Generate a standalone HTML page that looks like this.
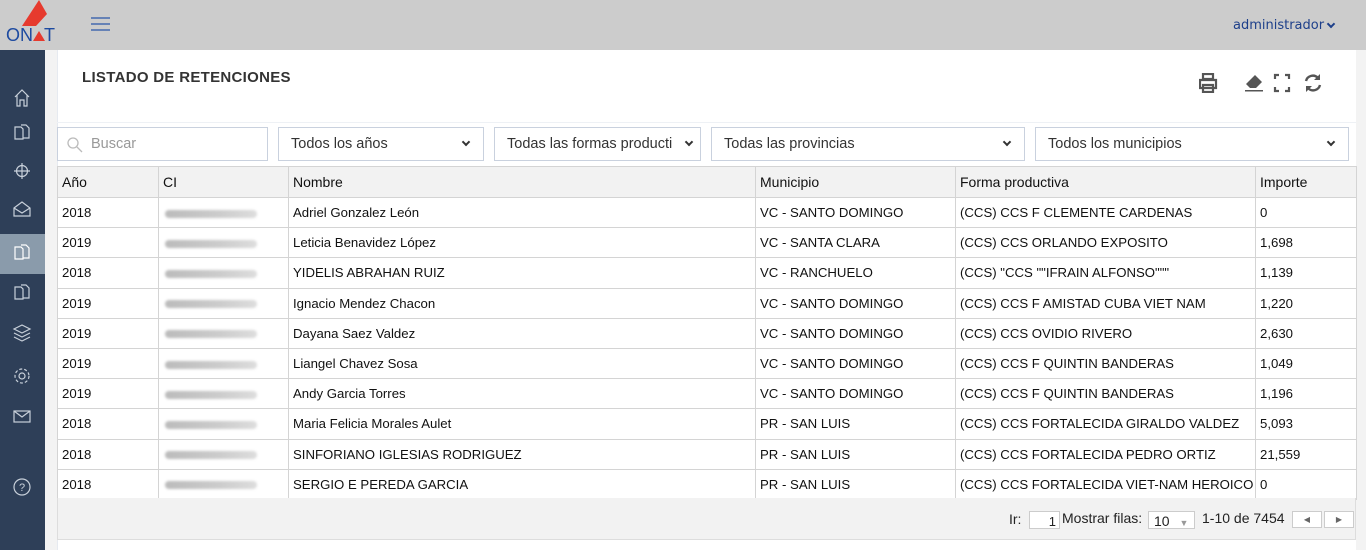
<!DOCTYPE html>
<html><head><meta charset="utf-8"><style>
*{box-sizing:border-box;margin:0;padding:0}
body{width:1366px;height:550px;overflow:hidden;background:#f3f3f3;font-family:"Liberation Sans",sans-serif;position:relative}
.hdr{position:absolute;left:0;top:0;width:1366px;height:50px;background:#cccccc}
.side{position:absolute;left:0;top:50px;width:45px;height:500px;background:#2e3f58}
.act{position:absolute;left:0;top:234px;width:45px;height:40px;background:#8a9bab}
.panel{position:absolute;left:57px;top:50px;width:1299px;height:500px;background:#fff;border-left:1px solid #e6eaf0}
.title{position:absolute;left:82px;top:69px;font-size:15px;font-weight:bold;color:#333;letter-spacing:.3px}
.sep{position:absolute;left:57px;top:122px;width:1299px;height:1px;background:#eef1f5}
.inp{position:absolute;top:127px;height:34px;border:1px solid #c9d1de;background:#fff;font-size:14.5px;color:#333;padding:8px 12px;white-space:nowrap;overflow:hidden}
.inp .ch{position:absolute;right:14px;top:11px;width:6px;height:6px;border-right:2px solid #333;border-bottom:2px solid #333;transform:rotate(45deg)}
table{position:absolute;left:57px;top:166px;width:1299px;table-layout:fixed;border-collapse:collapse;font-size:13.2px;color:#111}
td,th{border:1px solid #d4d4d4;height:30.2px;padding:0 3px 0 4px;text-align:left;font-weight:normal;white-space:nowrap;overflow:hidden}
th{background:#f2f2f2;height:31px;font-size:14px}
.blur{display:inline-block;width:92px;height:8px;border-radius:4px;background:linear-gradient(90deg,#bbb,#ccc 60%,#ddd);filter:blur(1.3px);vertical-align:middle;margin-left:2px}
.foot{position:absolute;left:57px;top:498px;width:1299px;height:42px;background:#f2f2f2;border:1px solid #ddd;border-top:none;font-size:14px;color:#222}
</style></head><body>
<div class="hdr">
<svg style="position:absolute;left:5px;top:0" width="54" height="44" viewBox="0 0 54 44"><polygon points="17,26 34,0 42,14 31,26" fill="#e63a2e"/><text x="1" y="41" font-family="Liberation Sans" font-size="18" fill="#1d4aa0">ON</text><polygon points="28,41 34,31 40,41" fill="#e63a2e"/><text x="39" y="41" font-family="Liberation Sans" font-size="18" fill="#1d4aa0">T</text></svg>
<svg style="position:absolute;left:91px;top:17px" width="19" height="14"><path d="M0 1H19M0 7H19M0 13H19" stroke="#2a56a8" stroke-width="1.3"/></svg>
<div style="position:absolute;left:1233px;top:18px;color:#1d3f8a;font-family:'DejaVu Sans',sans-serif;font-size:13px">administrador</div>
<div style="position:absolute;left:1328px;top:21px;width:6px;height:6px;border-right:2px solid #1d3f8a;border-bottom:2px solid #1d3f8a;transform:rotate(45deg)"></div>
</div>
<div class="side"></div>
<div class="act"></div>
<svg style="position:absolute;left:0;top:50px" width="45" height="500" fill="none" stroke="#c8d0da" stroke-width="1.2">
<path d="M15 47L22 40L29 47M17 45V56H20V50H24V56H27V45"/>
<path d="M15 77h6l2 2v10h-8zM21 75h5l3 3v10h-6"/>
<circle cx="22" cy="121" r="5.5"/><path d="M22 113v16M14 121h16"/>
<path d="M14 158l8-6 8 6v8H14zM14 158l8 5 8-5"/>
<path d="M15 197h6l2 2v10h-8zM21 195h5l3 3v10h-6" stroke="#fff"/>
<path d="M15 237h6l2 2v10h-8zM21 235h5l3 3v10h-6"/>
<path d="M22 275l8 4-8 4-8-4zM14 283l8 4 8-4M14 287l8 4 8-4"/>
<circle cx="22" cy="326" r="3"/><circle cx="22" cy="326" r="7" stroke-dasharray="3 2"/>
<rect x="14" y="361" width="16" height="11"/><path d="M14 361l8 6 8-6"/>
<circle cx="22" cy="437" r="8"/><text x="19" y="441" font-size="11" fill="#c8d0da" stroke="none" font-family="Liberation Sans">?</text>
</svg>
<div class="panel"></div>
<div class="title">LISTADO DE RETENCIONES</div>
<svg style="position:absolute;left:1199px;top:73px" width="130" height="20" fill="#555">
<path d="M4 1h10v5H4zM1 7h16v8H1zM4 12h10v7H4z" fill="none" stroke="#555" stroke-width="2.2"/>
<path d="M50 8l6-6 7 7-6 6h-6l-4-4zM46 17h18v1.5H46z"/>
<path d="M76 6V2h4M86 2h4v4M90 14v4h-4M80 18h-4v-4" fill="none" stroke="#555" stroke-width="2.2"/>
<path d="M107 8a7 7 0 0 1 12-3M121 12a7 7 0 0 1-12 3" fill="none" stroke="#555" stroke-width="2.4"/><path d="M121 1v6h-6zM107 19v-6h6z"/>
</svg>
<div class="sep"></div>
<div class="inp" style="left:57px;width:211px;color:#999;padding-left:33px">Buscar<svg style="position:absolute;left:9px;top:9px" width="16" height="16" fill="none" stroke="#bbb" stroke-width="1.3"><circle cx="6" cy="6" r="5"/><path d="M10 10l5 5"/></svg></div>
<div class="inp" style="left:278px;width:206px">Todos los años<span class="ch"></span></div>
<div class="inp" style="left:494px;width:207px">Todas las formas producti<span class="ch" style="right:8px"></span></div>
<div class="inp" style="left:711px;width:314px">Todas las provincias<span class="ch"></span></div>
<div class="inp" style="left:1035px;width:314px">Todos los municipios<span class="ch"></span></div>
<table>
<colgroup><col style="width:101px"><col style="width:130px"><col style="width:467px"><col style="width:200px"><col style="width:300px"><col style="width:101px"></colgroup>
<tr><th>Año</th><th>CI</th><th>Nombre</th><th>Municipio</th><th>Forma productiva</th><th>Importe</th></tr>
<tr><td>2018</td><td><span class="blur"></span></td><td>Adriel Gonzalez León</td><td>VC - SANTO DOMINGO</td><td>(CCS) CCS F CLEMENTE CARDENAS</td><td>0</td></tr>
<tr><td>2019</td><td><span class="blur"></span></td><td>Leticia Benavidez López</td><td>VC - SANTA CLARA</td><td>(CCS) CCS ORLANDO EXPOSITO</td><td>1,698</td></tr>
<tr><td>2018</td><td><span class="blur"></span></td><td>YIDELIS ABRAHAN RUIZ</td><td>VC - RANCHUELO</td><td>(CCS) "CCS ""IFRAIN ALFONSO"""</td><td>1,139</td></tr>
<tr><td>2019</td><td><span class="blur"></span></td><td>Ignacio Mendez Chacon</td><td>VC - SANTO DOMINGO</td><td>(CCS) CCS F AMISTAD CUBA VIET NAM</td><td>1,220</td></tr>
<tr><td>2019</td><td><span class="blur"></span></td><td>Dayana Saez Valdez</td><td>VC - SANTO DOMINGO</td><td>(CCS) CCS OVIDIO RIVERO</td><td>2,630</td></tr>
<tr><td>2019</td><td><span class="blur"></span></td><td>Liangel Chavez Sosa</td><td>VC - SANTO DOMINGO</td><td>(CCS) CCS F QUINTIN BANDERAS</td><td>1,049</td></tr>
<tr><td>2019</td><td><span class="blur"></span></td><td>Andy Garcia Torres</td><td>VC - SANTO DOMINGO</td><td>(CCS) CCS F QUINTIN BANDERAS</td><td>1,196</td></tr>
<tr><td>2018</td><td><span class="blur"></span></td><td>Maria Felicia Morales Aulet</td><td>PR - SAN LUIS</td><td>(CCS) CCS FORTALECIDA GIRALDO VALDEZ</td><td>5,093</td></tr>
<tr><td>2018</td><td><span class="blur"></span></td><td>SINFORIANO IGLESIAS RODRIGUEZ</td><td>PR - SAN LUIS</td><td>(CCS) CCS FORTALECIDA PEDRO ORTIZ</td><td>21,559</td></tr>
<tr><td>2018</td><td><span class="blur"></span></td><td>SERGIO E PEREDA GARCIA</td><td>PR - SAN LUIS</td><td>(CCS) CCS FORTALECIDA VIET-NAM HEROICO</td><td>0</td></tr>
</table>
<div class="foot">
<span style="position:absolute;left:951px;top:13px">Ir:</span>
<span style="position:absolute;left:971px;top:13px;width:31px;height:18px;border:1px solid #ccc;background:#fff;font-size:13px;text-align:right;padding:2px 3px 0 0">1</span>
<span style="position:absolute;left:1004px;top:12px">Mostrar filas:</span>
<span style="position:absolute;left:1090px;top:13px;width:47px;height:18px;border:1px solid #ccc;background:#fff;padding:1px 5px">10 <span style="color:#999;font-size:9px;margin-left:6px">▼</span></span>
<span style="position:absolute;left:1144px;top:12px">1-10 de 7454</span>
<span style="position:absolute;left:1234px;top:13px;width:30px;height:17px;border:1px solid #ccc;background:#fff;color:#666;font-size:8px;text-align:center;padding-top:3px">◀</span>
<span style="position:absolute;left:1266px;top:13px;width:30px;height:17px;border:1px solid #ccc;background:#fff;color:#666;font-size:8px;text-align:center;padding-top:3px">▶</span>
</div>
</body></html>
